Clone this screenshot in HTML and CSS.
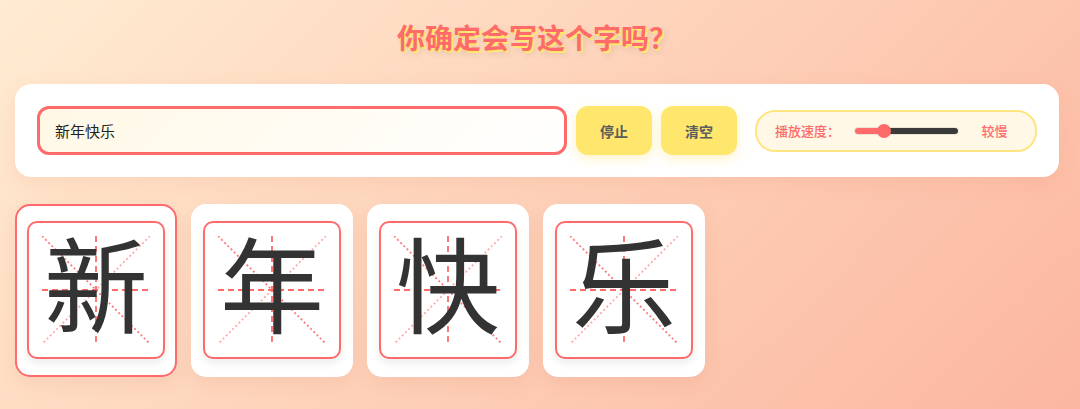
FILE: index.html
```html
<!DOCTYPE html>
<html lang="zh-CN">
<head>
    <meta charset="UTF-8">
    <meta name="viewport" content="width=device-width, initial-scale=1.0">
    <title>你确定会写这个字吗？</title>
    <link rel="stylesheet" href="styles.css">
</head>
<body>
    <div class="page">
        <h1 class="title">你确定会写这个字吗？</h1>

        <div class="panel">
            <input type="text" class="text-input" value="新年快乐">
            <button class="btn">停止</button>
            <button class="btn">清空</button>
            <div class="speed">
                <span class="speed-label">播放速度：</span>
                <input type="range" class="speed-range" min="0" max="100" value="25" style="--fill: 25%">
                <span class="speed-value">较慢</span>
            </div>
        </div>

        <div class="cards">
            <div class="card active">
                <div class="grid-box">
                    <svg class="grid" viewBox="0 0 108 108">
                        <line class="diag-a" x1="0" y1="0" x2="108" y2="108"/>
                        <line class="diag-b" x1="108" y1="0" x2="0" y2="108"/>
                        <line class="mid" x1="0" y1="54" x2="108" y2="54"/>
                        <line class="mid" x1="54" y1="0" x2="54" y2="108"/>
                    </svg>
                    <span class="char">新</span>
                </div>
            </div>
            <div class="card">
                <div class="grid-box">
                    <svg class="grid" viewBox="0 0 108 108">
                        <line class="diag-a" x1="0" y1="0" x2="108" y2="108"/>
                        <line class="diag-b" x1="108" y1="0" x2="0" y2="108"/>
                        <line class="mid" x1="0" y1="54" x2="108" y2="54"/>
                        <line class="mid" x1="54" y1="0" x2="54" y2="108"/>
                    </svg>
                    <span class="char">年</span>
                </div>
            </div>
            <div class="card">
                <div class="grid-box">
                    <svg class="grid" viewBox="0 0 108 108">
                        <line class="diag-a" x1="0" y1="0" x2="108" y2="108"/>
                        <line class="diag-b" x1="108" y1="0" x2="0" y2="108"/>
                        <line class="mid" x1="0" y1="54" x2="108" y2="54"/>
                        <line class="mid" x1="54" y1="0" x2="54" y2="108"/>
                    </svg>
                    <span class="char">快</span>
                </div>
            </div>
            <div class="card">
                <div class="grid-box">
                    <svg class="grid" viewBox="0 0 108 108">
                        <line class="diag-a" x1="0" y1="0" x2="108" y2="108"/>
                        <line class="diag-b" x1="108" y1="0" x2="0" y2="108"/>
                        <line class="mid" x1="0" y1="54" x2="108" y2="54"/>
                        <line class="mid" x1="54" y1="0" x2="54" y2="108"/>
                    </svg>
                    <span class="char">乐</span>
                </div>
            </div>
        </div>
    </div>
</body>
</html>
```

FILE: styles.css
```css
* {
    box-sizing: border-box;
}
html, body {
    margin: 0;
    min-height: 100vh;
}
body {
    font-family: "Noto Sans CJK SC", "Noto Sans", sans-serif;
    background: linear-gradient(135deg, #ffecd2 0%, #fcb69f 100%);
    overflow: hidden;
}
.page {
    padding: 17px 21px 0 15px;
}
.title {
    margin: 0 0 27px;
    font-size: 28px;
    line-height: 40px;
    font-weight: 700;
    text-align: center;
    color: #ff6b6b;
    text-shadow: 2px 2px 0 #ffe66d, 3px 4px 6px rgba(0, 0, 0, 0.1);
}
.panel {
    display: flex;
    align-items: center;
    gap: 9px;
    padding: 22px;
    background: #fff;
    border-radius: 16px;
    box-shadow: 0 6px 20px rgba(230, 120, 90, 0.12);
}
.text-input {
    flex: 1;
    height: 49px;
    padding: 0 15px;
    font-family: inherit;
    font-size: 15px;
    color: #222;
    border: 3px solid #ff6b6b;
    border-radius: 12px;
    background: linear-gradient(135deg, #fff8e6 0%, #ffffff 100%);
    outline: none;
}
.btn {
    height: 49px;
    padding: 0 24px;
    font-family: inherit;
    font-size: 14px;
    font-weight: 700;
    color: #5c5c5c;
    background: #ffe66d;
    border: none;
    border-radius: 12px;
    box-shadow: 0 4px 12px rgba(255, 220, 100, 0.35);
    cursor: pointer;
}
.speed {
    display: flex;
    align-items: center;
    margin-left: 9px;
    height: 42px;
    padding: 0 18px;
    background: #fff8e6;
    border: 2px solid #ffe580;
    border-radius: 20px;
}
.speed-label {
    font-size: 13px;
    font-weight: 500;
    color: #ff6b6b;
}
.speed-value {
    width: 45px;
    margin-left: 14px;
    text-align: center;
    font-size: 13px;
    font-weight: 500;
    color: #ff6b6b;
}
.speed-range {
    -webkit-appearance: none;
    appearance: none;
    width: 103px;
    height: 14px;
    margin: 0 0 0 15px;
    background: transparent;
}
.speed-range::-webkit-slider-runnable-track {
    height: 6px;
    border-radius: 3px;
    background: linear-gradient(to right, #ff6b6b var(--fill), #3a3a3a var(--fill));
    box-shadow: 0 0 0 1px rgba(0, 0, 0, 0.08);
}
.speed-range::-webkit-slider-thumb {
    -webkit-appearance: none;
    width: 14px;
    height: 14px;
    margin-top: -4px;
    border-radius: 50%;
    background: #ff6b6b;
    border: none;
}
.cards {
    display: flex;
    gap: 14px;
    margin-top: 27px;
}
.card {
    width: 162px;
    padding: 15px 10px 16px;
    background: #fff;
    border: 2px solid transparent;
    border-radius: 15px;
    box-shadow: 0 6px 18px rgba(200, 110, 80, 0.12);
}
.card.active {
    border-color: #ff6b6b;
}
.grid-box {
    display: grid;
    place-items: center;
    width: 138px;
    height: 138px;
    border: 2px solid #ff6b6b;
    border-radius: 10px;
    background: #fff;
    box-shadow: 0 4px 10px rgba(0, 0, 0, 0.08);
}
.grid, .char {
    grid-area: 1 / 1;
}
.grid {
    width: 108px;
    height: 108px;
}
.grid line {
    stroke-width: 1.8;
}
.grid .mid {
    stroke: #ff6b6b;
    stroke-dasharray: 6 4;
}
.grid .diag-a {
    stroke: #ff7a7a;
    stroke-dasharray: 2 2.5;
}
.grid .diag-b {
    stroke: #ffaaaa;
    stroke-dasharray: 2 2.5;
}
.char {
    margin-bottom: 18px;
    font-size: 104px;
    font-weight: 400;
    line-height: 1;
    color: #333;
}
```
